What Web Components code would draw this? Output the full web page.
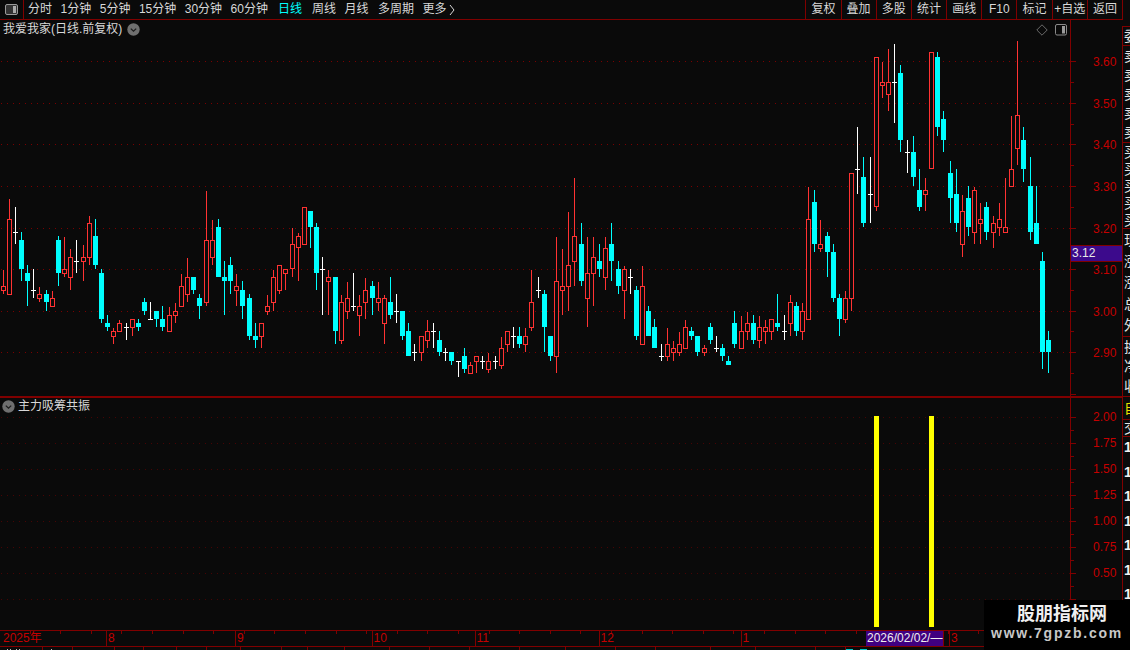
<!DOCTYPE html>
<html lang="zh">
<head>
<meta charset="utf-8">
<title>K线</title>
<style>
    html, body { margin: 0; height: 100%; background: #0a0a0a; overflow: hidden; }
</style>
</head>
<body>
<trade-app></trade-app>
<script>
// Colores y fuente compartidos por todos los componentes
const LINE = '#800000';
const BG = '#0a0a0a';
const FONT = '"Liberation Sans", "Noto Sans CJK SC", sans-serif';

// Velas leídas de la captura: [x, tipo, mecha arriba, mecha abajo, cuerpo arriba, cuerpo abajo]
// Cada bloque usa sus propias coordenadas (escala 3x con origen ox, oy)
const CANDLE_BLOCKS = [
    { ox: 0, oy: 190, rows: [
        [10,'r',240,312,289,302],[28,'r',27,315,88,314],[46,'w',51,162,127],[64,'c',126,273,150,237],
        [82,'c',225,348,249,273],[100,'w',237,324,301],[118,'r',291,336,313,326],[139,'c',300,363,312,336],
        [157,'r',303,350,325,350],[175,'c',138,288,150,249],[193,'r',141,261,238,251],[211,'r',177,300,202,263],
        [229,'w',150,249,214],[250,'r',165,273,202,215],[268,'r',78,225,100,203],[286,'c',87,237,138,225],
        [304,'c',237,399,249,387],[322,'c',375,423,399,411],[340,'r',414,462,424,440],[358,'r',390,426,400,425],
        [379,'w',399,450,412],[397,'r',388,438,388,413],[415,'c',387,423,399,411],[433,'c',324,375,336,363],
        [451,'w',336,390,388],[469,'c',363,411,363,387],[487,'c',348,423,387,411],[508,'r',351,426,376,425],
        [526,'r',339,399,363,377],[544,'r',252,350,289,350],[562,'r',204,336,262,314],[580,'c',261,312,261,300],
        [598,'c',312,387,324,348],[619,'r',3,348,151,338],[637,'r',90,225,151,203],[655,'c',87,261,111,261],
        [673,'c',213,375,261,273],[691,'c',201,312,225,273],[709,'r',252,348,289,302],[727,'c',273,387,300,348],
        [748,'c',312,450,324,438],[766,'c',400,474,438,450],[784,'r',400,474,400,440],[802,'r',315,375,349,365],
        [820,'r',240,363,262,338],[838,'r',226,312,226,302]
    ]},
    { ox: 280, oy: 170, rows: [
        [16,'r',298,360,298,311],[37,'r',174,321,223,298],[55,'r',189,333,199,235],[73,'r',112,224,112,224],
        [91,'c',124,234,124,171],[109,'c',159,360,171,309],[127,'w',261,435,298],[145,'r',300,435,322,335],
        [166,'c',321,522,321,483],[184,'r',375,522,397,513],[202,'r',336,447,385,425],[220,'w',309,423,409],
        [238,'r',375,498,409,437],[256,'r',324,447,361,398],[277,'c',333,435,348,384],[295,'r',336,423,385,398],
        [313,'r',375,522,385,461],[331,'c',321,447,396,435],[349,'w',372,459,424],[367,'c',423,510,423,498],
        [385,'c',459,558,483,558],[403,'w',522,573,547],[424,'r',499,573,499,548],[442,'r',450,534,484,512],
        [460,'w',459,534,484],[478,'c',483,558,510,546],[496,'w',534,573,547],[514,'c',546,585,546,573],
        [535,'w',574,621,574],[553,'c',534,609,558,597],[571,'r',576,612,586,611],[589,'r',559,609,559,575],
        [607,'w',558,597,574],[625,'r',549,609,574,599],[646,'w',558,597,574],[664,'r',501,597,535,587],
        [682,'r',484,546,484,524],[700,'w',471,534,498],[718,'c',471,534,498,522],[736,'r',474,546,499,524],
        [754,'r',300,483,397,473],[775,'w',321,384,361],[793,'c',360,546,372,471],[811,'c',498,573,498,558],
        [829,'r',201,609,334,560]
    ]},
    { ox: 540, oy: 170, rows: [
        [67,'r',237,435,349,362],[85,'r',126,423,286,350],[103,'r',24,348,199,275],[124,'c',159,348,222,333],
        [142,'r',201,471,310,386],[160,'r',201,408,262,311],[178,'c',222,321,273,297],[196,'r',201,360,235,323],
        [214,'c',159,333,222,273],[235,'c',273,372,297,348],[253,'r',288,447,298,362],[271,'w',297,372,322],
        [289,'c',348,510,360,498],[307,'r',288,525,349,524],[325,'c',408,498,423,498],[343,'c',447,534,471,534],
        [364,'w',522,573,559],[382,'r',474,573,523,560],[400,'r',513,573,535,548],[418,'r',486,558,523,548],
        [436,'r',450,537,472,536],[454,'c',471,510,483,498],[472,'c',498,558,498,546],[493,'r',525,558,535,548],
        [511,'c',459,522,471,510],[529,'w',498,546,535],[547,'c',522,573,534,558],[565,'c',558,585,573,585],
        [583,'c',423,534,459,522],[604,'r',438,537,484,536],[622,'r',426,510,460,485],[640,'c',435,522,459,510],
        [658,'r',438,534,472,513],[676,'r',450,522,472,485],[694,'r',448,510,448,485],[712,'c',372,483,459,471],
        [733,'w',435,510,484],[751,'r',375,498,397,461],[769,'c',396,498,408,483],[787,'r',399,510,424,485]
    ]},
    { ox: 790, oy: 40, rows: [
        [55,'r',441,840,538,839],[73,'c',450,636,486,612],[91,'r',540,636,613,626],[112,'c',576,711,588,636],
        [130,'c',612,786,636,774],[148,'c',762,888,774,837],[166,'r',753,849,775,839],[184,'r',400,813,400,776],
        [202,'w',261,462,388],[220,'c',351,561,411,549],[241,'w',351,549,463],[259,'r',51,513,52,502],
        [277,'r',66,174,127,139],[295,'r',27,213,127,164],[313,'w',12,249,127],[331,'c',75,336,99,300],
        [352,'w',300,399,337],[370,'c',288,438,336,411],[388,'c',387,513,450,501],[406,'r',414,513,451,464],
        [424,'r',37,388,37,388],[442,'c',36,288,51,261],[460,'c',213,336,237,300],[481,'c',363,549,399,474],
        [499,'c',387,576,462,549],[517,'r',465,651,514,614],[535,'c',438,588,474,561],[553,'r',441,612,451,578],
        [571,'r',489,612,538,551],[589,'c',486,600,501,576],[610,'r',528,624,550,578],[628,'r',489,588,538,563],
        [646,'r',414,579,562,578],[664,'r',228,441,388,440],[682,'r',3,375,226,326],[700,'c',261,426,300,387],
        [721,'c',351,600,438,576],[739,'c',438,612,549,612],[757,'c',636,987,663,936],[775,'c',873,999,900,936]
    ]}
];

// Genera las líneas punteadas de la cuadrícula
function gridLines(start, step, count, opacity) {
    let out = '';
    for (let i = 0; i < count; i++) {
        const y = Math.round(start + step * i) + 0.5;
        out += `<line x1="1" x2="1070" y1="${y}" y2="${y}" stroke="#7a0000" stroke-dasharray="1 5" opacity="${opacity}"/>`;
    }
    return out;
}

// Botón redondo gris con flecha, usado en los títulos de los paneles
const ROUND_ARROW = `<svg width="13" height="13" viewBox="0 0 13 13"><circle cx="6.5" cy="6.5" r="6.2" fill="#6f6f6f"/><path d="M3.8 5.6 6.5 8.2 9.2 5.6" fill="none" stroke="#1c1c1c" stroke-width="1.3"/></svg>`;

// Barra superior: periodos a la izquierda y botones a la derecha
class TopBar extends HTMLElement {
    connectedCallback() {
        const periods = ['分时','1分钟','5分钟','15分钟','30分钟','60分钟','日线','周线','月线','多周期','更多'];
        const buttons = ['复权','叠加','多股','统计','画线','F10','标记','+自选','返回'];
        this.attachShadow({ mode: 'open' }).innerHTML = `
            <style>
                :host { display: block; padding-right: 7px; font: 12px/19px ${FONT}; color: #d8d8d8; }
                .bar { display: flex; height: 19px; border-bottom: 1px solid ${LINE}; }
                .toggle { width: 23px; display: flex; align-items: center; justify-content: center; border-right: 1px solid ${LINE}; }
                nav { display: flex; gap: 8.5px; padding-left: 4px; flex: 1; white-space: nowrap; }
                nav span.on { color: #00ffff; margin-left: 1.5px; }
                nav span.wide { margin-left: 1px; }
                .more { display: flex; align-items: center; gap: 2px; }
                .btns { display: flex; border-right: 1px solid ${LINE}; }
                .btns span { width: 35.2px; box-sizing: border-box; border-left: 1px solid ${LINE}; text-align: center; white-space: nowrap; }
            </style>
            <div class="bar">
                <div class="toggle">
                    <svg width="13" height="11" viewBox="0 0 13 11"><rect x=".5" y=".5" width="12" height="10" rx="1.5" fill="#333" stroke="#9a9a9a"/><rect x="8" y="2" width="3" height="7" fill="#aaa"/></svg>
                </div>
                <nav>
                    ${periods.map(p => {
                        if (p === '更多') return `<span class="more">${p}<svg width="6" height="12" viewBox="0 0 6 12"><path d="M1 1 5 6 1 11" fill="none" stroke="#d8d8d8"/></svg></span>`;
                        const cls = p === '日线' ? 'on' : (p === '周线' ? 'on-next' : (p === '多周期' ? 'wide' : ''));
                        return `<span class="${cls}" ${cls === 'on-next' ? 'style="margin-left:1.5px"' : ''}>${p}</span>`;
                    }).join('')}
                </nav>
                <div class="btns">${buttons.map(b => `<span>${b}</span>`).join('')}</div>
            </div>`;
    }
}

// Eje de precios con marcas y etiquetas; top es la coordenada Y de página del panel
class PriceAxis extends HTMLElement {
    connectedCallback() {
        const top = +this.getAttribute('top');
        const start = +this.getAttribute('start');
        const step = +this.getAttribute('step');
        const labels = this.getAttribute('labels').split(',');
        const end = +this.getAttribute('end');
        const lift = +this.getAttribute('lift');
        let marks = '';
        for (let y = start, i = 0; y < end; y += step / 2, i++) {
            const major = i % 2 === 0;
            const py = Math.round(y) - top;
            marks += `<i style="top:${py}px;width:${major ? 5 : 3}px"></i>`;
            if (major && labels[i / 2]) marks += `<b style="top:${py - lift}px">${labels[i / 2]}</b>`;
        }
        this.attachShadow({ mode: 'open' }).innerHTML = `
            <style>
                :host { display: block; position: relative; width: 52px; box-sizing: border-box; border-left: 1px solid ${LINE}; font: 12px/16px ${FONT}; color: #c40000; }
                i { position: absolute; left: 0; height: 1px; background: ${LINE}; }
                b { position: absolute; left: 22px; font-weight: normal; }
            </style>
            ${marks}<slot></slot>`;
    }
}

// Etiqueta morada con el precio actual sobre el eje
class PriceTag extends HTMLElement {
    connectedCallback() {
        this.attachShadow({ mode: 'open' }).innerHTML = `
            <style>
                :host { position: absolute; left: 0; right: 0; top: ${this.getAttribute('top')}px; height: 17px; box-sizing: border-box;
                        background: #3c0a8c; border-top: 1px solid ${LINE}; border-bottom: 1px solid ${LINE};
                        color: #e8e8e8; font: 12px/15px ${FONT}; padding-left: 1px; }
            </style><slot></slot>`;
    }
}

// Panel principal de velas
class KlinePane extends HTMLElement {
    connectedCallback() {
        let out = gridLines(61.3, 41.55, 8, 1);
        const px = v => Math.round(v);
        CANDLE_BLOCKS.forEach(({ ox, oy, rows }) => {
            rows.forEach(([zx, type, wt, wb, a, b]) => {
                const cx = Math.floor(ox + zx / 3);
                const top = px(oy + wt / 3), bot = px(oy + wb / 3);
                if (type === 'w') {
                    const t = px(oy + a / 3);
                    out += `<rect x="${cx}" y="${top}" width="1" height="${bot - top}" fill="#fff"/><rect x="${cx - 2}" y="${t}" width="5" height="1" fill="#fff"/>`;
                    return;
                }
                const bt = px(oy + a / 3), bb = Math.max(px(oy + b / 3), bt + 1);
                const color = type === 'r' ? '#ff3232' : '#00ffff';
                if (top < bt) out += `<rect x="${cx}" y="${top}" width="1" height="${bt - top}" fill="${color}"/>`;
                if (bot > bb) out += `<rect x="${cx}" y="${bb}" width="1" height="${bot - bb}" fill="${color}"/>`;
                out += type === 'r'
                    ? `<rect x="${cx - 1.5}" y="${bt + 0.5}" width="4" height="${bb - bt - 1}" fill="${BG}" stroke="${color}"/>`
                    : `<rect x="${cx - 2}" y="${bt}" width="5" height="${bb - bt}" fill="${color}"/>`;
            });
        });
        this.attachShadow({ mode: 'open' }).innerHTML = `
            <style>
                :host { display: flex; height: 376px; position: relative; font: 12px/16px ${FONT}; color: #d8d8d8; }
                svg.plot { width: 1070px; height: 376px; display: block; flex: none; }
                .title { position: absolute; left: 3px; top: 1px; display: flex; align-items: center; gap: 5px; }
                .tools { position: absolute; left: 1036px; top: 4px; display: flex; align-items: center; gap: 7px; }
                ::slotted(price-axis) { flex: none; }
            </style>
            <svg class="plot" viewBox="0 20 1070 376" shape-rendering="crispEdges">${out}</svg>
            <div class="title"><span>我爱我家(日线.前复权)</span>${ROUND_ARROW}</div>
            <div class="tools">
                <svg width="12" height="12" viewBox="0 0 12 12"><path d="M6 .8 11.2 6 6 11.2.8 6Z" fill="none" stroke="#6a6a6a"/></svg>
                <svg width="13" height="12" viewBox="0 0 13 12"><rect x=".5" y=".5" width="11" height="10.5" rx="1.5" fill="none" stroke="#8a8a8a"/><rect x="7" y="2" width="3" height="7.5" fill="#9a9a9a"/></svg>
            </div>
            <slot></slot>`;
    }
}

// Panel inferior con el indicador
class SignalPane extends HTMLElement {
    connectedCallback() {
        this.attachShadow({ mode: 'open' }).innerHTML = `
            <style>
                :host { display: flex; height: 234px; box-sizing: border-box; border-top: 2px solid ${LINE}; position: relative; font: 12px/16px ${FONT}; color: #d8d8d8; }
                svg.plot { width: 1070px; height: 232px; display: block; flex: none; }
                .title { position: absolute; left: 2px; top: 0; display: flex; align-items: center; gap: 3px; }
                ::slotted(price-axis) { flex: none; }
            </style>
            <svg class="plot" viewBox="0 398 1070 232" shape-rendering="crispEdges">
                ${gridLines(416.5, 26.1, 8, 0.55)}
                <rect x="874" y="416" width="5" height="211" fill="#ffff00"/>
                <rect x="929" y="416" width="5" height="211" fill="#ffff00"/>
            </svg>
            <div class="title">${ROUND_ARROW}<span>主力吸筹共振</span></div>
            <slot></slot>`;
    }
}

// Eje de tiempo con los meses y la fecha seleccionada
class TimeAxis extends HTMLElement {
    connectedCallback() {
        const cells = [['2025年',106],['8',129],['9',136.5],['10',103],['11',124],['12',142],['1',122.5]];
        this.attachShadow({ mode: 'open' }).innerHTML = `
            <style>
                :host { display: block; font: 12px/15px ${FONT}; color: #c40000; }
                .row { display: flex; height: 17px; box-sizing: border-box; border-top: 1px solid ${LINE}; border-bottom: 1px solid ${LINE};
                       background: repeating-linear-gradient(90deg, transparent 0 29.6px, ${LINE} 29.6px 30.6px) 0 0 / 100% 3px no-repeat; }
                .cell { flex: none; box-sizing: border-box; padding-left: 1px; border-left: 1px solid ${LINE}; white-space: nowrap; }
                .cell:first-child { border-left: 0; padding-left: 3px; }
                .date { flex: none; width: 78px; box-sizing: border-box; margin-left: 3px; border-right: 1px solid ${LINE}; background: #400080; color: #eee; padding-left: 1px; white-space: nowrap; }
                .last { flex: 1; margin-left: 5px; padding-left: 1px; border-left: 1px solid ${LINE}; }
            </style>
            <div class="row">
                ${cells.map(([t, w]) => `<span class="cell" style="width:${w}px">${t}</span>`).join('')}
                <span class="date">2026/02/02/—</span>
                <span class="last">3</span>
            </div>`;
    }
}

// Pestañas inferiores, casi cortadas por el borde de la ventana
class TabStrip extends HTMLElement {
    connectedCallback() {
        const widths = [43,30,42,29,33,30,34,41,26,37,45,40,40,50,46,50,40,55,45,60,30];
        const marks = [[7,1,'#bbb'],[10,1,'#bbb'],[16,1,'#bbb'],[19,1,'#bbb'],[51,1,'#bbb'],[846,7,'#00c8c8'],[860,7,'#00c8c8']];
        this.attachShadow({ mode: 'open' }).innerHTML = `
            <style>
                :host { display: flex; height: 3px; overflow: hidden; }
                span { flex: none; box-sizing: border-box; border-right: 1px solid ${LINE}; }
                u { position: absolute; bottom: 0; height: 1px; display: block; }
            </style>
            ${widths.map(w => `<span style="width:${w}px"></span>`).join('')}
            ${marks.map(([x, w, c]) => `<u style="left:${x}px;width:${w}px;background:${c}"></u>`).join('')}`;
    }
}

// Columna derecha de cotización, recortada por la ventana
class QuoteStrip extends HTMLElement {
    connectedCallback() {
        const blocks = [
            [19, ['委比']],
            [97, ['卖五','卖四','卖三','卖二','卖一']],
            [86, ['买一','买二','买三','买四','买五']],
            [108, ['现价','涨跌','涨幅','总手','外盘']],
            [60, ['换手','净资产','收益']],
            [23, ['自选']],
            [17, ['交易']]
        ];
        const digits = ['1','1','1','1','1','1','1'];
        this.attachShadow({ mode: 'open' }).innerHTML = `
            <style>
                :host { display: block; width: 8px; box-sizing: border-box; padding-top: 6px; overflow: hidden; font: 14px/16px ${FONT}; color: #e4e4e4; }
                .col { display: flex; flex-direction: column; height: 604px; border-left: 1px solid ${LINE}; border-top: 1px solid ${LINE}; }
                section { flex: none; box-sizing: border-box; display: flex; flex-direction: column; justify-content: space-around; border-bottom: 1px solid ${LINE}; padding-left: 1px; white-space: nowrap; }
                .gold { color: #e8e000; }
                .nums { display: flex; flex-direction: column; padding: 2px 0 0 1px; gap: 8.5px; font-weight: bold; color: #f2f2f2; }
            </style>
            <div class="col">
                ${blocks.map(([h, rows], i) => `<section class="${i === 5 ? 'gold' : ''}" style="height:${h}px">${rows.map(r => `<span>${r}</span>`).join('')}</section>`).join('')}
                <div class="nums">${digits.map(d => `<span>${d}</span>`).join('')}</div>
            </div>`;
    }
}

// Marca de agua en la esquina inferior derecha
class SiteMark extends HTMLElement {
    connectedCallback() {
        this.attachShadow({ mode: 'open' }).innerHTML = `
            <style>
                :host { position: absolute; right: 0; bottom: 0; width: 146px; height: 50px; box-sizing: border-box; padding-top: 3px; background: #000; color: #e6e6e6;
                        display: flex; flex-direction: column; align-items: center; }
                .name { font: bold 18px/22px ${FONT}; color: #f0f0f0; margin-left: 10px; }
                .url { font: bold 14px/17px ${FONT}; letter-spacing: 1.75px; color: #c8c8c8; }
            </style>
            <span class="name">股朋指标网</span>
            <span class="url">www.7gpzb.com</span>`;
    }
}

// Contenedor principal de la aplicación
class TradeApp extends HTMLElement {
    connectedCallback() {
        this.attachShadow({ mode: 'open' }).innerHTML = `
            <style>
                :host { display: flex; flex-direction: column; width: 1130px; height: 650px; position: relative; overflow: hidden; background: ${BG}; }
                .main { display: flex; flex: 1; min-height: 0; }
                .panes { width: 1122px; flex: none; display: flex; flex-direction: column; }
            </style>
            <top-bar></top-bar>
            <div class="main">
                <div class="panes">
                    <kline-pane>
                        <price-axis top="20" lift="7" start="61.3" step="41.55" end="396" labels="3.60,3.50,3.40,3.30,3.20,3.10,3.00,2.90">
                            <price-tag top="225">3.12</price-tag>
                        </price-axis>
                    </kline-pane>
                    <signal-pane>
                        <price-axis top="398" lift="8" start="416.5" step="26.1" end="630" labels="2.00,1.75,1.50,1.25,1.00,0.75,0.50"></price-axis>
                    </signal-pane>
                    <time-axis></time-axis>
                    <tab-strip></tab-strip>
                </div>
                <quote-strip></quote-strip>
            </div>
            <site-mark></site-mark>`;
    }
}

customElements.define('top-bar', TopBar);
customElements.define('price-tag', PriceTag);
customElements.define('price-axis', PriceAxis);
customElements.define('kline-pane', KlinePane);
customElements.define('signal-pane', SignalPane);
customElements.define('time-axis', TimeAxis);
customElements.define('tab-strip', TabStrip);
customElements.define('quote-strip', QuoteStrip);
customElements.define('site-mark', SiteMark);
customElements.define('trade-app', TradeApp);
</script>
</body>
</html>
